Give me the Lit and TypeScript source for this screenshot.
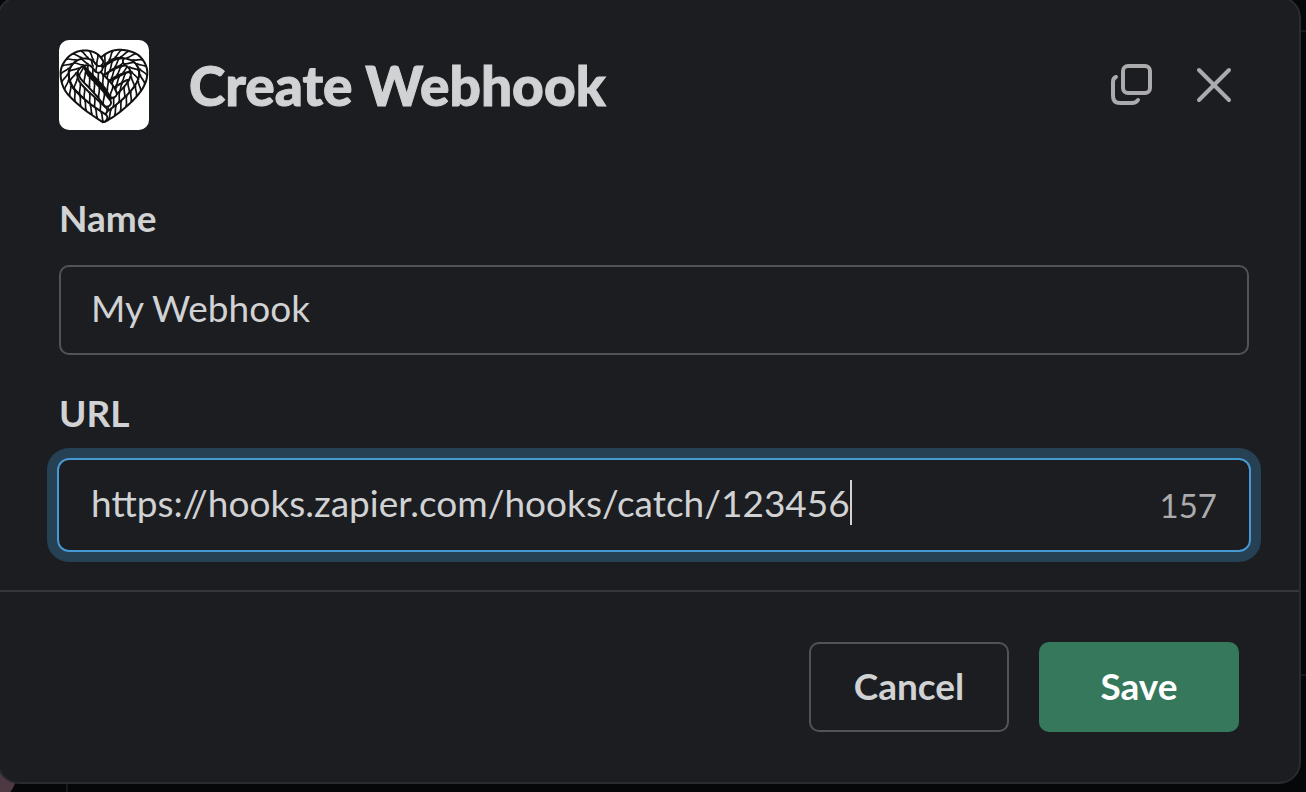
import { LitElement, html, svg, css } from "lit";
import { customElement, property, state } from "lit/decorators.js";
import { live } from "lit/directives/live.js";

type Point = [number, number];

interface Rope {
  points: Point[];
  width: number;
  twist: 1 | -1;
}

/* Strands of the heart, back to front, in a 270-unit square. */
const ROPES: Rope[] = [
  { width: 20, twist: -1, points: [[130, 98], [150, 82], [176, 68], [198, 66]] },
  { width: 20, twist: -1, points: [[134, 120], [158, 104], [182, 92], [204, 86]] },
  { width: 20, twist: -1, points: [[148, 140], [172, 126], [194, 114], [208, 108]] },
  { width: 20, twist: -1, points: [[158, 160], [178, 148], [198, 136], [208, 130]] },
  { width: 23, twist: -1, points: [[202, 62], [222, 80], [228, 106], [216, 134], [192, 162], [164, 186], [134, 210]] },
  { width: 22, twist: -1, points: [[130, 66], [146, 52], [172, 42], [204, 44], [232, 56], [250, 82], [252, 110], [240, 140], [216, 170], [188, 196], [160, 218], [134, 234]] },
  { width: 22, twist: 1, points: [[80, 66], [102, 90], [126, 114], [148, 138], [162, 162]] },
  { width: 22, twist: 1, points: [[64, 82], [74, 108], [98, 134], [122, 160], [144, 188]] },
  { width: 23, twist: 1, points: [[120, 88], [100, 66], [76, 64], [54, 76], [42, 100], [50, 130], [74, 158], [102, 184], [132, 212]] },
  { width: 22, twist: 1, points: [[122, 68], [108, 52], [86, 44], [60, 46], [36, 60], [19, 86], [18, 116], [29, 146], [52, 172], [82, 198], [110, 218], [134, 234]] },
];

function sample(points: Point[], step: number): { p: Point; t: Point }[] {
  const dense: Point[] = [];
  for (let i = 0; i < points.length - 1; i++) {
    const a = points[Math.max(0, i - 1)];
    const b = points[i];
    const c = points[i + 1];
    const d = points[Math.min(points.length - 1, i + 2)];
    for (let k = 0; k < 12; k++) {
      const u = k / 12;
      const at = (j: 0 | 1) =>
        0.5 *
        (2 * b[j] +
          (c[j] - a[j]) * u +
          (2 * a[j] - 5 * b[j] + 4 * c[j] - d[j]) * u * u +
          (3 * b[j] - a[j] - 3 * c[j] + d[j]) * u * u * u);
      dense.push([at(0), at(1)]);
    }
  }
  dense.push(points[points.length - 1]);
  const out: { p: Point; t: Point }[] = [];
  let carried = step / 2;
  for (let i = 1; i < dense.length; i++) {
    const dx = dense[i][0] - dense[i - 1][0];
    const dy = dense[i][1] - dense[i - 1][1];
    const len = Math.hypot(dx, dy) || 1;
    carried += len;
    if (carried >= step) {
      carried -= step;
      out.push({ p: dense[i], t: [dx / len, dy / len] });
    }
  }
  return out;
}

function outline(points: Point[]): string {
  return "M" + sample(points, 3).map(({ p }) => `${p[0].toFixed(1)} ${p[1].toFixed(1)}`).join("L");
}

/* Slanted creases across a strand, which make it read as twisted rope. */
function creases({ points, width, twist }: Rope): string {
  const half = (width / 2 - 1) * twist;
  return sample(points, 21)
    .map(({ p, t }) => {
      const at = (along: number, across: number) =>
        `${(p[0] + t[0] * along - t[1] * across).toFixed(1)} ${(p[1] + t[1] * along + t[0] * across).toFixed(1)}`;
      return `M${at(-12, -half)}C${at(-3, -half)} ${at(3, half)} ${at(12, half)}`;
    })
    .join("");
}

@customElement("rope-heart")
export class RopeHeart extends LitElement {
  static styles = css`
    :host {
      display: block;
      flex: none;
      width: 90px;
      height: 90px;
      border-radius: 10px;
      background: #fff;
      overflow: hidden;
    }
    svg {
      display: block;
      width: 100%;
      height: 100%;
    }
    .edge,
    .fill,
    .crease {
      fill: none;
      stroke-linejoin: round;
    }
    .edge {
      stroke: #111;
      stroke-linecap: round;
    }
    .fill {
      stroke: #fff;
      stroke-linecap: round;
    }
    .crease {
      stroke: #111;
      stroke-width: 5;
    }
  `;

  render() {
    return html`<svg viewBox="0 0 270 270" aria-hidden="true">
      <path d="M124 76 180 60 215 100 150 200 60 90Z" fill="#111" />
      ${ROPES.map((rope) => {
        const d = outline(rope.points);
        return svg`<g>
          <path class="edge" d=${d} stroke-width=${rope.width + 8}></path>
          <path class="fill" d=${d} stroke-width=${rope.width - 4}></path>
          <path class="crease" d=${creases(rope)}></path>
        </g>`;
      })}
    </svg>`;
  }
}

@customElement("text-field")
export class TextField extends LitElement {
  @property() label = "";
  @property() value = "";
  @property({ type: Number }) limit = 0;
  @property({ type: Boolean, reflect: true }) active = false;

  static styles = css`
    :host {
      display: block;
    }
    label {
      display: block;
      font-size: 37px;
      font-weight: 700;
      line-height: 44px;
      padding-bottom: 25px;
    }
    .box {
      display: flex;
      align-items: center;
      box-sizing: border-box;
      height: 90px;
      padding: 0 30px;
      border: 2px solid #515357;
      border-radius: 10px;
    }
    input {
      flex: 1;
      min-width: 0;
      height: 60px;
      margin: 0;
      padding: 0 0 5px;
      box-sizing: border-box;
      border: 0;
      outline: 0;
      background: none;
      color: inherit;
      font: inherit;
      font-size: 37px;
    }
    .caret {
      width: 2px;
      height: 45px;
      margin-bottom: 5px;
      background: #d1d2d3;
    }
    .count {
      margin-left: auto;
      color: #ababad;
      font-size: 33px;
    }
    :host([active]) .box {
      height: 94px;
      margin: -2px;
      padding: 0 32px;
      border-color: #4799d3;
      border-radius: 12px;
      box-shadow: 0 0 0 10px #264154;
    }
    :host([active]) input {
      flex: none;
      max-width: 85%;
      field-sizing: content;
    }
  `;

  private onInput(e: Event) {
    this.value = (e.target as HTMLInputElement).value;
  }

  render() {
    return html`
      <label for="field">${this.label}</label>
      <div class="box">
        <input id="field" type="text" spellcheck="false" .value=${live(this.value)} @input=${this.onInput} />
        ${this.active ? html`<span class="caret"></span>` : null}
        ${this.limit ? html`<span class="count">${this.limit}</span>` : null}
      </div>
    `;
  }
}

@customElement("app-root")
export class AppRoot extends LitElement {
  @state() private name = "My Webhook";
  @state() private url = "https://hooks.zapier.com/hooks/catch/123456";

  static styles = css`
    :host {
      display: flow-root;
      min-height: 100vh;
      overflow: hidden;
      font-family: Lato, "Liberation Sans", sans-serif;
      color: #d1d2d3;
      background:
        radial-gradient(circle at -20px 770px, #4e3842 37px, transparent 38px),
        linear-gradient(#17181a, #17181a) 66px 100% / 2px 12px no-repeat,
        linear-gradient(#17181a, #17181a) 100% 30px / 6px 2px no-repeat,
        linear-gradient(#17181a, #17181a) 100% 674px / 6px 2px no-repeat,
        #060709;
    }
    .dialog {
      margin: -4px 5px 0 -3px;
      border: 2px solid #2a2b2f;
      border-radius: 22px;
      background: #1c1d21;
    }
    header {
      display: flex;
      align-items: center;
      padding: 42px 49px 0 60px;
    }
    h1 {
      flex: 1;
      margin: 0 0 0 40px;
      font-size: 55px;
      font-weight: 900;
      line-height: 68px;
      -webkit-text-stroke: 1px currentColor;
    }
    .icon {
      display: block;
      width: 72px;
      height: 72px;
      margin-left: 10px;
      padding: 0;
      border: 0;
      background: none;
      color: #ababad;
    }
    .icon svg {
      display: block;
      width: 72px;
      height: 72px;
      fill: none;
      stroke: currentColor;
      stroke-linecap: round;
      stroke-linejoin: round;
    }
    .fields {
      display: grid;
      gap: 36px;
      padding: 66px 50px 40px 60px;
    }
    footer {
      display: flex;
      justify-content: flex-end;
      gap: 30px;
      padding: 50px 60px;
      border-top: 2px solid #35373b;
    }
    .button {
      box-sizing: border-box;
      width: 200px;
      height: 90px;
      padding: 0 0 4px;
      border: 2px solid #515357;
      border-radius: 10px;
      background: none;
      color: inherit;
      font: inherit;
      font-size: 37px;
      font-weight: 700;
    }
    .primary {
      border-color: #35785b;
      background: #35785b;
      color: #fff;
    }
  `;

  render() {
    return html`
      <main class="dialog" role="dialog" aria-labelledby="title">
        <header>
          <rope-heart></rope-heart>
          <h1 id="title">Create Webhook</h1>
          <button class="icon" type="button" aria-label="Open in new window">
            <svg viewBox="0 0 72 72" stroke-width="4">
              <rect x="27" y="17" width="27" height="27" rx="5" />
              <path d="M20 28Q17 29 17 33V47Q17 54 24 54H36Q40 54 42 51" />
            </svg>
          </button>
          <button class="icon" type="button" aria-label="Close">
            <svg viewBox="0 0 72 72" stroke-width="4">
              <path d="M21 21 51 51M51 21 21 51" />
            </svg>
          </button>
        </header>
        <section class="fields">
          <text-field label="Name" .value=${this.name}></text-field>
          <text-field label="URL" .value=${this.url} .limit=${157} active></text-field>
        </section>
        <footer>
          <button class="button" type="button">Cancel</button>
          <button class="button primary" type="button">Save</button>
        </footer>
      </main>
    `;
  }
}
